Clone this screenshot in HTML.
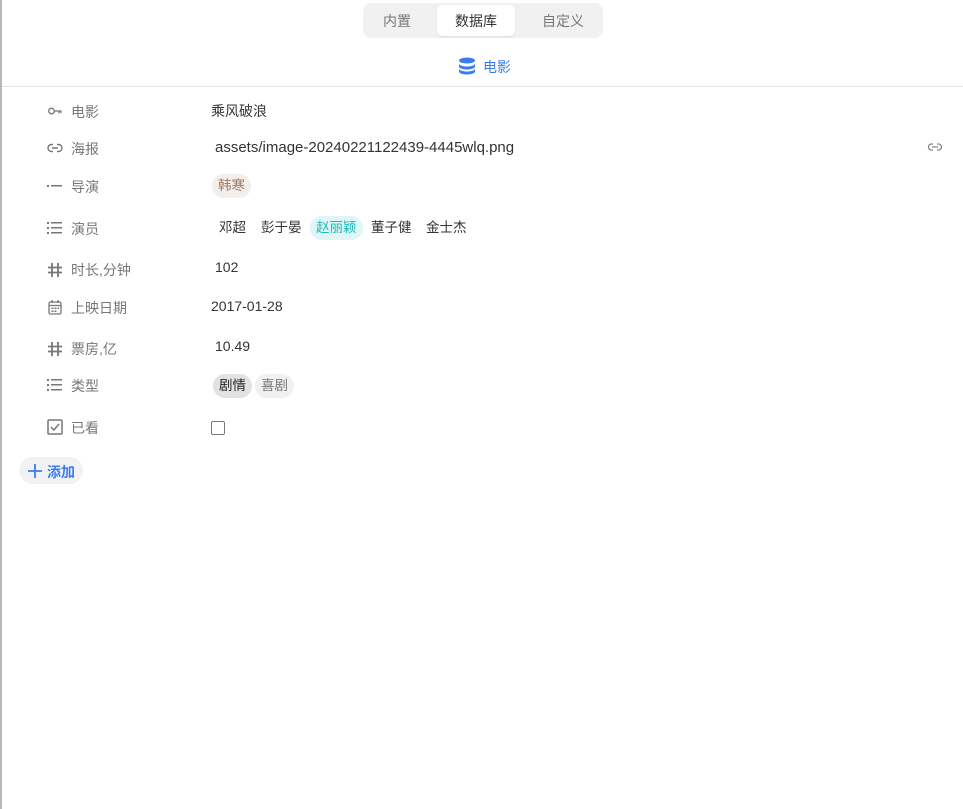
<!DOCTYPE html>
<html><head><meta charset="utf-8"><style>
*{margin:0;padding:0;box-sizing:border-box}
body{width:963px;height:809px;background:#fff;position:relative;overflow:hidden;font-family:"Liberation Sans","Noto Sans CJK SC",sans-serif;font-size:14px;color:#333}
.a{position:absolute;white-space:nowrap}
.lbl{color:#777;font-size:14px}
.tag{position:absolute;height:24px;line-height:24px;border-radius:12px;padding:0 6px;font-size:13.5px}
svg{position:absolute}
</style></head><body>
<div class="a" style="left:0;top:0;width:2px;height:809px;background:#b8b8b8"></div>
<div class="a" style="left:363px;top:3px;width:240px;height:35px;background:#f1f1f1;border-radius:8px"></div>
<div class="a" style="left:437px;top:5px;width:78px;height:31px;background:#fff;border-radius:6px;box-shadow:0 1px 2px rgba(0,0,0,.08)"></div>
<div class="a" style="left:383px;top:11px;color:#777">内置</div>
<div class="a" style="left:455px;top:11px;color:#333">数据库</div>
<div class="a" style="left:542px;top:11px;color:#777">自定义</div>
<svg style="left:458px;top:57px" width="18" height="18" viewBox="0 0 18 18"><g fill="#3b7cf0"><ellipse cx="9" cy="3.5" rx="8" ry="3"/><path d="M1 6.5c0 1.7 3.6 3 8 3s8-1.3 8-3v3c0 1.700-3.6 3-8 3s-8-1.3-8-3z"/><path d="M1 11.5c0 1.7 3.6 3 8 3s8-1.3 8-3v3c0 1.7-3.6 3-8 3s-8-1.3-8-3z"/></g></svg>
<div class="a" style="left:483px;top:57px;color:#3b7cf0">电影</div>
<div class="a" style="left:2px;top:86px;width:961px;height:1px;background:#e4e4e4"></div>

<svg style="left:47px;top:104px" width="16" height="14" viewBox="0 0 16 14" fill="none" stroke="#777" stroke-width="1.3"><circle cx="4.5" cy="7" r="2.8"/><path d="M7.3 7H14.5M12 7v2.5M14 7v2"/></svg>
<div class="a lbl" style="left:71px;top:102px">电影</div>
<div class="a" style="left:211px;top:101px">乘风破浪</div>

<svg style="left:47px;top:141px" width="16" height="14" viewBox="0 0 16 14" fill="none" stroke="#777" stroke-width="1.4"><path d="M6 3.5H4.5a3.5 3.5 0 0 0 0 7H6M10 3.5h1.5a3.5 3.5 0 0 1 0 7H10M5 7h6"/></svg>
<div class="a lbl" style="left:71px;top:139px">海报</div>
<div class="a" style="left:215px;top:139px;font-size:15px">assets/image-20240221122439-4445wlq.png</div>
<svg style="left:927px;top:140px" width="16" height="14" viewBox="0 0 16 14" fill="none" stroke="#888" stroke-width="1.3"><path d="M6 4H4.5a3 3 0 0 0 0 6H6M10 4h1.5a3 3 0 0 1 0 6H10M5 7h6"/></svg>

<svg style="left:47px;top:180px" width="16" height="12" viewBox="0 0 16 12" fill="#777"><rect x="0" y="5" width="2" height="2"/><rect x="4" y="5" width="11" height="1.5"/></svg>
<div class="a lbl" style="left:71px;top:177px">导演</div>
<div class="tag" style="left:212px;top:174px;background:#f3eeea;color:#a07a60">韩寒</div>

<svg style="left:47px;top:221px" width="16" height="14" viewBox="0 0 16 14" fill="#777"><rect x="0" y="1" width="2" height="2"/><rect x="4" y="1" width="11" height="1.5"/><rect x="0" y="6" width="2" height="2"/><rect x="4" y="6" width="11" height="1.5"/><rect x="0" y="11" width="2" height="2"/><rect x="4" y="11" width="11" height="1.5"/></svg>
<div class="a lbl" style="left:71px;top:219px">演员</div>
<div class="tag" style="left:213px;top:216px">邓超</div>
<div class="tag" style="left:255px;top:216px">彭于晏</div>
<div class="tag" style="left:310px;top:216px;background:#dff6f6;color:#1fb8b8">赵丽颖</div>
<div class="tag" style="left:365px;top:216px">董子健</div>
<div class="tag" style="left:420px;top:216px">金士杰</div>

<svg style="left:47px;top:262px" width="16" height="16" viewBox="0 0 16 16" fill="none" stroke="#777" stroke-width="1.8"><path d="M5 1v14M11 1v14M1 5.5h14M1 10.5h14"/></svg>
<div class="a lbl" style="left:71px;top:260px">时长,分钟</div>
<div class="a" style="left:215px;top:259px">102</div>

<svg style="left:48px;top:299px" width="14" height="16" viewBox="0 0 14 16" fill="none" stroke="#777" stroke-width="1.3"><rect x="1" y="3" width="12" height="12" rx="1.5"/><path d="M4 1v3M10 1v3M1 6.5h12"/><g fill="#777" stroke="none"><rect x="3.5" y="8.5" width="2" height="1.5"/><rect x="6.5" y="8.5" width="2" height="1.5"/><rect x="9.5" y="8.5" width="1.5" height="1.5"/><rect x="3.5" y="11.5" width="2" height="1.5"/><rect x="6.5" y="11.5" width="2" height="1.5"/></g></svg>
<div class="a lbl" style="left:71px;top:298px">上映日期</div>
<div class="a" style="left:211px;top:298px">2017-01-28</div>

<svg style="left:47px;top:341px" width="16" height="16" viewBox="0 0 16 16" fill="none" stroke="#777" stroke-width="1.8"><path d="M5 1v14M11 1v14M1 5.5h14M1 10.5h14"/></svg>
<div class="a lbl" style="left:71px;top:339px">票房,亿</div>
<div class="a" style="left:215px;top:338px">10.49</div>

<svg style="left:47px;top:378px" width="16" height="14" viewBox="0 0 16 14" fill="#777"><rect x="0" y="1" width="2" height="2"/><rect x="4" y="1" width="11" height="1.5"/><rect x="0" y="6" width="2" height="2"/><rect x="4" y="6" width="11" height="1.5"/><rect x="0" y="11" width="2" height="2"/><rect x="4" y="11" width="11" height="1.5"/></svg>
<div class="a lbl" style="left:71px;top:376px">类型</div>
<div class="tag" style="left:213px;top:374px;background:#e2e2e2;color:#222">剧情</div>
<div class="tag" style="left:255px;top:374px;background:#f0f0f0;color:#777">喜剧</div>

<svg style="left:47px;top:419px" width="16" height="16" viewBox="0 0 16 16" fill="none" stroke="#777" stroke-width="1.5"><rect x="1" y="1" width="14" height="14" rx="1"/><path d="M4 8l3 3 5-6"/></svg>
<div class="a lbl" style="left:71px;top:418px">已看</div>
<div class="a" style="left:211px;top:421px;width:14px;height:14px;border:1.5px solid #777;border-radius:2px"></div>

<div class="a" style="left:19px;top:457px;width:64px;height:27px;background:#f1f2f4;border-radius:14px"></div>
<svg style="left:27px;top:463px" width="16" height="16" viewBox="0 0 16 16" fill="none" stroke="#3b7cf0" stroke-width="1.8"><path d="M8 1v14M1 8h14"/></svg>
<div class="a" style="left:47px;top:462px;color:#3b7cf0;font-weight:bold">添加</div>
</body></html>
